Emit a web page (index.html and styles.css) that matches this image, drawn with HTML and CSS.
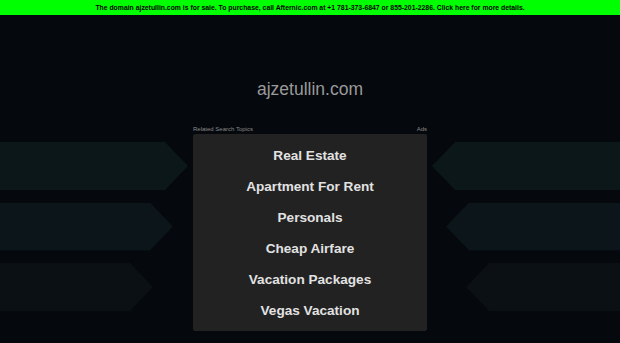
FILE: index.html
```html
<!DOCTYPE html>
<html>
<head>
<meta charset="utf-8">
<link rel="stylesheet" href="styles.css">
</head>
<body>
<div class="topbar">The domain ajzetullin.com is for sale. To purchase, call Afternic.com at +1 781-373-6847 or 855-201-2286. Click here for more details.</div>
<h1 class="domain">ajzetullin.com</h1>
<div class="main">
  <div class="side side-left">
    <div class="arrow arrow-l a1"></div>
    <div class="arrow arrow-l a2"></div>
    <div class="arrow arrow-l a3"></div>
  </div>
  <div class="center">
    <div class="labels"><span>Related Search Topics</span><span>Ads</span></div>
    <div class="box">
      <div class="item">Real Estate</div>
      <div class="item">Apartment For Rent</div>
      <div class="item">Personals</div>
      <div class="item">Cheap Airfare</div>
      <div class="item">Vacation Packages</div>
      <div class="item">Vegas Vacation</div>
    </div>
  </div>
  <div class="side side-right">
    <div class="arrow arrow-r a1"></div>
    <div class="arrow arrow-r a2"></div>
    <div class="arrow arrow-r a3"></div>
  </div>
</div>
</body>
</html>
```
FILE: styles.css
```css
html, body {
  margin: 0;
  padding: 0;
  background: #05080c;
  height: 100%;
  overflow: hidden;
}
body {
  font-family: "Liberation Sans", Arial, sans-serif;
}
.topbar {
  background: #00ff00;
  color: #000;
  font-weight: bold;
  font-size: 6.85px;
  height: 15px;
  line-height: 15px;
  text-align: center;
  white-space: nowrap;
}
.domain {
  margin: 64px 0 0;
  height: 20px;
  line-height: 20px;
  font-size: 17.5px;
  font-weight: normal;
  color: #9a9a9a;
  text-align: center;
}
.main {
  margin-top: 26px;
  display: flex;
  align-items: flex-start;
}
.side {
  width: 193px;
  padding-top: 17px;
  display: flex;
  flex-direction: column;
  gap: 12.5px;
}
.side-left { align-items: flex-start; }
.side-right { align-items: flex-end; }
.arrow {
  height: 48px;
}
.arrow-l {
  clip-path: polygon(0 0, calc(100% - 23px) 0, 100% 50%, calc(100% - 23px) 100%, 0 100%);
}
.arrow-r {
  clip-path: polygon(23px 0, 100% 0, 100% 100%, 23px 100%, 0 50%);
}
.arrow-l.a1 { width: 188px; }
.arrow-l.a2 { width: 173px; }
.arrow-l.a3 { width: 153px; }
.arrow-r.a1 { width: 188px; }
.arrow-r.a2 { width: 174px; }
.arrow-r.a3 { width: 154px; }
.a1 { background: #0c1719; }
.a2 { background: #0b151a; }
.a3 { background: #0a1014; }
.center {
  width: 234px;
}
.labels {
  height: 9px;
  display: flex;
  justify-content: space-between;
  font-size: 6px;
  line-height: 9px;
  color: #8a8a8a;
}
.box {
  background: #222222;
  border-radius: 2px;
  padding: 6px 0 5px;
}
.item {
  height: 31px;
  line-height: 31px;
  text-align: center;
  font-weight: bold;
  font-size: 13.6px;
  color: #e2e2e2;
}
```
